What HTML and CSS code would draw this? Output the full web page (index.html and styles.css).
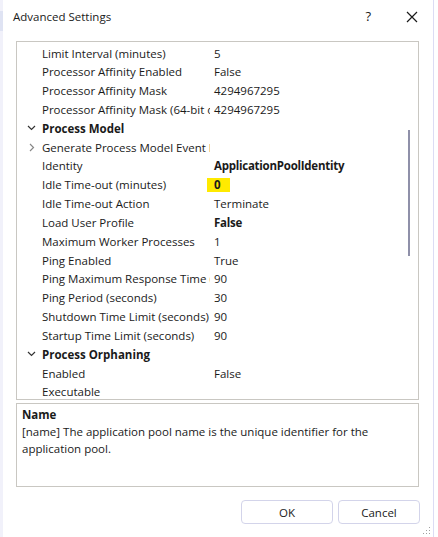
FILE: index.html
```html
<!DOCTYPE html>
<html>
<head>
<meta charset="utf-8">
<link rel="stylesheet" href="styles.css">
</head>
<body>
<div class="window">
  <div class="titlebar">
    <span class="title">Advanced Settings</span>
    <span class="help">?</span>
    <svg class="close" width="12" height="12" viewBox="0 0 12 12"><path d="M1 1 L11 11 M11 1 L1 11" stroke="#1a1a1a" stroke-width="1.2" fill="none"/></svg>
  </div>
  <div class="grid">
    <div class="row"><span class="exp"></span><span class="label">Limit Interval (minutes)</span><span class="value">5</span></div>
    <div class="row"><span class="exp"></span><span class="label">Processor Affinity Enabled</span><span class="value">False</span></div>
    <div class="row"><span class="exp"></span><span class="label">Processor Affinity Mask</span><span class="value">4294967295</span></div>
    <div class="row"><span class="exp"></span><span class="label">Processor Affinity Mask (64-bit option)</span><span class="value">4294967295</span></div>
    <div class="row cat"><span class="exp"><svg width="9" height="6" viewBox="0 0 9 6"><path d="M1 1 L4.5 4.5 L8 1" stroke="#333" stroke-width="1.2" fill="none"/></svg></span><span class="label b">Process Model</span></div>
    <div class="row"><span class="exp"><svg width="6" height="9" viewBox="0 0 6 9"><path d="M1 1 L4.5 4.5 L1 8" stroke="#888" stroke-width="1.2" fill="none"/></svg></span><span class="label">Generate Process Model Event Log Entry</span><span class="value"></span></div>
    <div class="row"><span class="exp"></span><span class="label">Identity</span><span class="value b">ApplicationPoolIdentity</span></div>
    <div class="row"><span class="exp"></span><span class="label">Idle Time-out (minutes)</span><span class="value"><span class="hl b">0</span></span></div>
    <div class="row"><span class="exp"></span><span class="label">Idle Time-out Action</span><span class="value">Terminate</span></div>
    <div class="row"><span class="exp"></span><span class="label">Load User Profile</span><span class="value b">False</span></div>
    <div class="row"><span class="exp"></span><span class="label">Maximum Worker Processes</span><span class="value">1</span></div>
    <div class="row"><span class="exp"></span><span class="label">Ping Enabled</span><span class="value">True</span></div>
    <div class="row"><span class="exp"></span><span class="label">Ping Maximum Response Time (seconds)</span><span class="value">90</span></div>
    <div class="row"><span class="exp"></span><span class="label">Ping Period (seconds)</span><span class="value">30</span></div>
    <div class="row"><span class="exp"></span><span class="label">Shutdown Time Limit (seconds)</span><span class="value">90</span></div>
    <div class="row"><span class="exp"></span><span class="label">Startup Time Limit (seconds)</span><span class="value">90</span></div>
    <div class="row cat"><span class="exp"><svg width="9" height="6" viewBox="0 0 9 6"><path d="M1 1 L4.5 4.5 L8 1" stroke="#333" stroke-width="1.2" fill="none"/></svg></span><span class="label b">Process Orphaning</span></div>
    <div class="row"><span class="exp"></span><span class="label">Enabled</span><span class="value">False</span></div>
    <div class="row"><span class="exp"></span><span class="label">Executable</span><span class="value"></span></div>
    <div class="scrollbar"></div>
  </div>
  <div class="desc">
    <div class="desc-title">Name</div>
    <div class="desc-text">[name] The application pool name is the unique identifier for the application pool.</div>
  </div>
  <div class="buttons">
    <button class="btn ok">OK</button>
    <button class="btn cancel">Cancel</button>
  </div>
  <div class="grip"></div>
</div>
</body>
</html>
```
FILE: styles.css
```css
html, body {
  margin: 0;
  padding: 0;
  background: #ffffff;
}
body {
  font-family: "Open Sans", "Noto Sans", sans-serif;
  font-size: 11.5px;
  color: #1a1a1a;
  width: 438px;
  height: 537px;
  overflow: hidden;
}
.window {
  position: relative;
  width: 430px;
  height: 537px;
  border-left: 3px solid #f1f1fa;
  border-right: 1px solid #dcdcf4;
  background: #fff;
  display: flex;
  flex-direction: column;
  box-sizing: content-box;
}
.window::before {
  content: "";
  position: absolute;
  left: -3px;
  top: 11px;
  width: 3px;
  height: 20px;
  background: #dfe3f3;
}
.titlebar {
  height: 41px;
  display: flex;
  align-items: flex-start;
  padding-top: 8px;
  box-sizing: border-box;
}
.title {
  margin-left: 10px;
  font-size: 11.5px;
  line-height: 17px;
  flex: 1;
}
.help {
  font-size: 13px;
  line-height: 17px;
  margin-right: 35px;
}
.close {
  margin-top: 3px;
  margin-right: 15px;
}
.grid {
  position: relative;
  margin-left: 13px;
  width: 403px;
  height: 359px;
  border: 1px solid #c9c7c2;
  padding-top: 1.6px;
  box-sizing: border-box;
  overflow: hidden;
}
.row {
  display: flex;
  height: 18.83px;
  align-items: center;
  white-space: nowrap;
}
.exp {
  width: 25px;
  display: flex;
  justify-content: center;
  padding-left: 4px;
  box-sizing: border-box;
}
.label {
  width: 168px;
  margin-right: 4px;
  overflow: hidden;
  flex: none;
}
.value {
  flex: 1;
}
.b {
  font-weight: 700;
}
.value.b {
  letter-spacing: -0.25px;
}
.hl {
  display: inline-block;
  background: #ffea00;
  padding: 0 9px 0 7px;
  margin-left: -7px;
  line-height: 14px;
}
.scrollbar {
  position: absolute;
  right: 8px;
  top: 88px;
  width: 2px;
  height: 126px;
  background: #8f90a9;
}
.desc {
  margin-top: 3px;
  margin-left: 13px;
  width: 403px;
  height: 84px;
  border: 1px solid #c9c7c2;
  box-sizing: border-box;
  padding: 2px 5px;
  line-height: 17px;
}
.desc-title {
  font-weight: 700;
}
.desc-text {
  padding-right: 30px;
}
.buttons {
  display: flex;
  justify-content: flex-end;
  gap: 5px;
  margin-top: 13px;
  margin-right: 13px;
}
.btn {
  font-family: "Open Sans", "Noto Sans", sans-serif;
  font-size: 11.5px;
  color: #1a1a1a;
  background: #fff;
  border: 1px solid #d3d4ea;
  border-radius: 4px;
  height: 24px;
  padding: 0;
}
.ok { width: 92px; }
.cancel { width: 82px; }
.grip {
  position: absolute;
  right: 3px;
  bottom: 3px;
  width: 8px;
  height: 8px;
  background-image: radial-gradient(circle, #a0a0a0 0.8px, transparent 1px);
  background-size: 3px 3px;
  clip-path: polygon(100% 0, 100% 100%, 0 100%);
}
```
